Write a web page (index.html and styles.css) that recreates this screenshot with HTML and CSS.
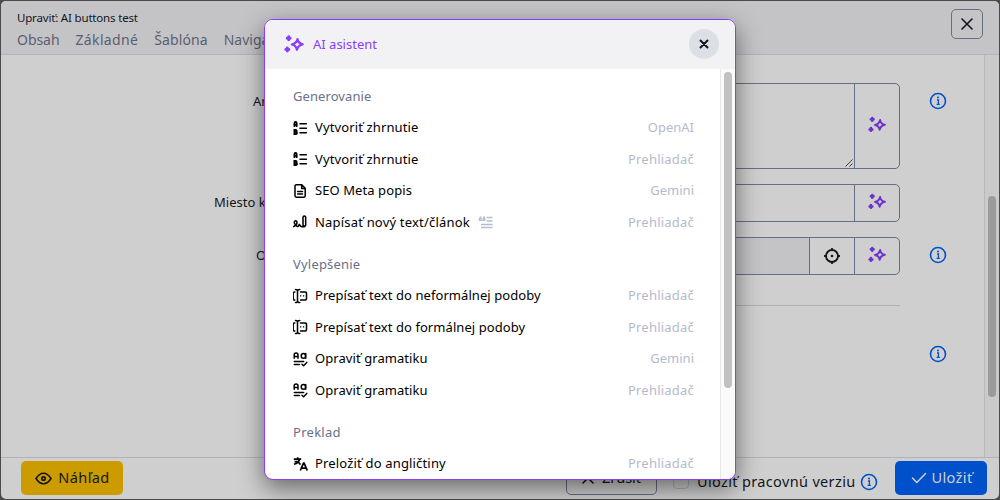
FILE: index.html
```html
<!DOCTYPE html>
<html lang="sk">
<head>
<meta charset="utf-8">
<title>AI asistent</title>
<link rel="stylesheet" href="styles.css">
</head>
<body>
<svg class="defs" width="0" height="0">
  <symbol id="spark" viewBox="0 0 20 18"><path d="M4.7 1.700v3M3.200 3.200h3M3.300 13v3M1.800 14.500h3" stroke="currentColor" stroke-width="2.900" stroke-linecap="round"/><path d="M13.500 4Q14 8.300 18.700 9.300Q14 10.300 12.900 14.800Q12.200 10.300 7.800 9.500Q12.500 8.500 13.500 4Z" fill="none" stroke="currentColor" stroke-width="2.200" stroke-linejoin="round"/></symbol>
  <symbol id="info" viewBox="0 0 18 18"><circle cx="9" cy="9" r="7.5" fill="none" stroke="currentColor" stroke-width="1.6"/><path d="M8 8h1.4v4.2M7.6 12.3h3.2" fill="none" stroke="currentColor" stroke-width="1.3"/><circle cx="9" cy="5.6" r="1" fill="currentColor"/></symbol>
  <symbol id="list" viewBox="0 0 16 16"><g fill="none" stroke="currentColor" stroke-linecap="round"><path d="M7 3.700h6.400M7 8.300h6.400M7 12.800h6.400" stroke-width="1.500"/><path d="M1.400 6.200V3.400a1.150 1.400 0 0 1 2.300 0v2.800M1.400 4.800h2.300M1.400 9.800h1.300a.9.900 0 0 1 0 2h-1.300zM1.400 11.800h1.500a1 1 0 0 1 0 2.200H1.400z" stroke-width="1.800"/></g></symbol>
  <symbol id="file" viewBox="0 0 16 16"><path d="M8.700 2v3.400h3.400M3.400 1.700h5.400l3.400 3.500v7.600a1.400 1.400 0 0 1-1.400 1.400H3.400A1.400 1.400 0 0 1 2 12.800V3.100a1.400 1.400 0 0 1 1.400-1.400zM4.600 8.400h4.900M4.600 11h4.900" fill="none" stroke="currentColor" stroke-width="1.500" stroke-linejoin="round" stroke-linecap="round"/></symbol>
  <symbol id="sign" viewBox="2 0 24 24"><path d="M3 19c3.333-2 5-4 5-6c0-3-1-3-2-3s-2.032 1.085-2 3c.034 2.048 1.658 2.877 2.500 4c1.500 2 2.500 2.500 3.500 1c.667-1 1.167-1.833 1.500-2.500c1 2.333 2.333 3.500 4 3.500h2.500M21 17V5c0-1.121-.879-2-2-2s-2 .879-2 2v12l2 2l2-2" fill="none" stroke="currentColor" stroke-width="2.300" stroke-linejoin="round" stroke-linecap="round"/></symbol>
  <symbol id="quote" viewBox="0 0 16 14"><path d="M8.500 2.500h6M8.500 6h6M3 9.500h11.500M3 12.500h11.500" fill="none" stroke="currentColor" stroke-width="1.300"/><path d="M3.400 1.800Q1.300 1.800 1.300 5.300H3.200V3.700H1.500M7 1.800Q4.900 1.800 4.900 5.300H6.800V3.700H5.100" fill="none" stroke="currentColor" stroke-width="1.200"/></symbol>
  <symbol id="rewrite" viewBox="1 0 16 16"><path d="M3.500 1.400q2 0 2 1.600v10q0 1.600-2 1.600M7.800 1.400q-2.200 0-2.200 1.600M7.800 14.600q-2.200 0-2.200-1.600M2.800 4H2.400A1.200 1.200 0 0 0 1.200 5.200v5.600A1.200 1.200 0 0 0 2.400 12h.4M8.500 4h4.800a1.200 1.200 0 0 1 1.200 1.200v5.600a1.200 1.200 0 0 1-1.200 1.200H8.500" fill="none" stroke="currentColor" stroke-width="1.500" stroke-linecap="round"/><path d="M8 7.300h1.300v1.300H8zM10.900 7.300h1.300v1.300h-1.300z" fill="currentColor"/></symbol>
  <symbol id="spell" viewBox="0 0 16 16"><g fill="none" stroke="currentColor" stroke-width="1.500" stroke-linecap="round" stroke-linejoin="round"><path d="M1.200 7.200V3.800a1.900 1.900 0 0 1 3.800 0v3.400M1.200 5.400h3.800M12.700 2.500v4.700"/><ellipse cx="10.400" cy="4.900" rx="2.200" ry="2.300"/><path d="M1.300 10.400h9.400M1.300 13.400h5.200M9 13.300l1.600 1.400 3.200-3.300"/></g></symbol>
  <symbol id="lang" viewBox="0 0 16 16"><g fill="none" stroke="currentColor" stroke-width="1.700"><path d="M.8 3.200h7.400M4.700 1.300v1.900M6.500 3.400Q5.500 7 1 8.300M1.500 5.600H5q1.500 2 2.500 3M7.300 14.500l3.200-7.300h.6l3.200 7.300M8.300 12.200h5"/></g></symbol>
  <symbol id="cross" viewBox="0 0 12 12"><path d="M1 1l10 10M11 1L1 11" stroke="currentColor" stroke-width="1.600" stroke-linecap="round"/></symbol>
</svg>

<div class="window">
  <header class="window-head">
    <div>
      <div class="window-title">Upraviť: AI buttons test</div>
      <nav class="tabs"><span class="t1">Obsah</span><span class="t2">Základné</span><span class="t3">Šablóna</span><span>Naviga</span></nav>
    </div>
    <button class="close-window"><svg width="12" height="12"><use href="#cross"/></svg></button>
  </header>

  <main class="window-body">
    <div class="form">
      <div class="row row-area">
        <label class="l1">An</label>
        <div class="group"><div class="field"><svg class="grip" width="8" height="8" viewBox="0 0 8 8"><path d="M.5 7.500l7-7M4.500 7.500l3-3" stroke="#333" stroke-width=".9"/></svg></div><div class="addon"><svg width="18" height="17"><use href="#spark"/></svg></div></div>
        <svg class="info" width="18" height="18"><use href="#info"/></svg>
      </div>
      <div class="row">
        <label class="l2">Miesto k</label>
        <div class="group"><div class="field"></div><div class="addon"><svg width="18" height="17"><use href="#spark"/></svg></div></div>
      </div>
      <div class="row">
        <label class="l3">O</label>
        <div class="group"><div class="field locked"></div><div class="addon target"><svg width="18" height="18" viewBox="0 0 18 18"><g fill="none" stroke="currentColor" stroke-width="1.800"><circle cx="9" cy="9" r="6"/><path d="M9 1v3M9 14v3M1 9h3M14 9h3"/></g><circle cx="9" cy="9" r="1.300" fill="currentColor"/></svg></div><div class="addon"><svg width="18" height="17"><use href="#spark"/></svg></div></div>
        <svg class="info" width="18" height="18"><use href="#info"/></svg>
      </div>
      <div class="rule"></div>
      <svg class="info last" width="18" height="18"><use href="#info"/></svg>
    </div>
    <div class="track"><div class="thumb"></div></div>
  </main>

  <footer class="window-foot">
    <button class="btn preview"><svg width="17" height="13" viewBox="0 0 17 13"><path d="M1 6.500Q4.300 1.200 8.500 1.200T16 6.500Q12.700 11.800 8.500 11.800T1 6.500Z" fill="none" stroke="currentColor" stroke-width="1.600"/><circle cx="8.500" cy="6.500" r="1.700" fill="none" stroke="currentColor" stroke-width="1.700"/></svg><span>Náhľad</span></button>
    <div class="actions">
      <button class="btn cancel"><svg width="12" height="12"><use href="#cross"/></svg><span>Zrušiť</span></button>
      <span class="check"></span>
      <span class="draft">Uložiť pracovnú verziu</span>
      <svg class="foot-info" width="18" height="18"><use href="#info"/></svg>
      <button class="btn save"><svg width="16" height="12" viewBox="0 0 16 12"><path d="M1.500 6l4.300 4.500L14.500 1.500" fill="none" stroke="currentColor" stroke-width="1.500" stroke-linecap="round" stroke-linejoin="round"/></svg><span>Uložiť</span></button>
    </div>
  </footer>
</div>

<section class="modal">
  <header class="modal-head">
    <svg width="20" height="18"><use href="#spark"/></svg>
    <h1>AI asistent</h1>
    <button class="close-modal"><svg width="10" height="10" viewBox="0 0 10 10"><path d="M1.500 1.500l7 7M8.500 1.500l-7 7" stroke="currentColor" stroke-width="2" stroke-linecap="round"/></svg></button>
  </header>
  <div class="modal-body">
    <div class="menu">
      <div class="section">
        <h2 class="h-gen">Generovanie</h2>
        <div class="item"><svg><use href="#list"/></svg><span class="zhr">Vytvoriť zhrnutie</span><em class="openai">OpenAI</em></div>
        <div class="item"><svg><use href="#list"/></svg><span class="zhr">Vytvoriť zhrnutie</span><em>Prehliadač</em></div>
        <div class="item"><svg><use href="#file"/></svg><span class="seo">SEO Meta popis</span><em class="gemini">Gemini</em></div>
        <div class="item"><svg><use href="#sign"/></svg><span class="nap">Napísať nový text/článok</span><svg class="quote"><use href="#quote"/></svg><em>Prehliadač</em></div>
      </div>
      <div class="section">
        <h2 class="h-vyl">Vylepšenie</h2>
        <div class="item"><svg><use href="#rewrite"/></svg><span class="nef">Prepísať text do neformálnej podoby</span><em>Prehliadač</em></div>
        <div class="item"><svg><use href="#rewrite"/></svg><span class="for">Prepísať text do formálnej podoby</span><em>Prehliadač</em></div>
        <div class="item"><svg><use href="#spell"/></svg><span class="gra">Opraviť gramatiku</span><em class="gemini">Gemini</em></div>
        <div class="item"><svg><use href="#spell"/></svg><span class="gra">Opraviť gramatiku</span><em>Prehliadač</em></div>
      </div>
      <div class="section">
        <h2 class="h-pre">Preklad</h2>
        <div class="item"><svg><use href="#lang"/></svg><span class="ang">Preložiť do angličtiny</span><em>Prehliadač</em></div>
      </div>
    </div>
    <div class="menu-track"><div class="menu-thumb"></div></div>
  </div>
</section>
</body>
</html>
```
FILE: styles.css
```css
* { box-sizing: border-box; }
body { margin: 0; width: 1000px; height: 500px; overflow: hidden; position: relative; background: #4b4a4b; font: 13px/20px "Noto Sans", sans-serif; color: #13151b; }
.defs { position: absolute; }
button { font: inherit; color: inherit; padding: 0; margin: 0; }
svg { flex: none; display: block; }
h1, h2 { margin: 0; font-weight: 400; font-size: 13px; }

.window { margin: 1px; width: 998px; height: 498px; display: flex; flex-direction: column; background: #cfcfcf; border-radius: 5px; overflow: hidden; }
.window-head { height: 54px; flex: none; display: flex; justify-content: space-between; background: #c4c4c7; border-bottom: 1px solid #b1b2be; padding: 7px 16px 0; }
.window-title { font-size: 11.500px; letter-spacing: -.18px; line-height: 20px; }
.tabs { display: flex; gap: 16px; font-size: 14px; line-height: 24px; color: #5a6072; white-space: nowrap; }
.t1 { letter-spacing: -.05px; }
.t2 { letter-spacing: .35px; }
.t3 { letter-spacing: .1px; }
.close-window { width: 32px; height: 30px; margin-top: 1px; display: grid; place-items: center; background: none; border: 1px solid #686e84; border-radius: 5px; }
.window-body { flex: 1; min-height: 0; display: flex; }
.form { flex: 1; display: flex; flex-direction: column; gap: 15px; padding: 28px 37px 0 0; }
.row { display: flex; height: 38px; flex: none; }
.row-area { height: 86px; }
.row label { width: 99px; margin-left: 213px; line-height: 36px; white-space: nowrap; }
.row .l1 { padding-left: 39px; }
.row .l3 { padding-left: 42px; }
.group { width: 587px; display: flex; border: 1px solid #686e84; border-radius: 5px; overflow: hidden; }
.field { flex: 1; display: flex; align-items: flex-end; justify-content: flex-end; padding: 1px; }
.locked { background: #c4c4c7; }
.addon { width: 45px; border-left: 1px solid #686e84; display: grid; place-items: center; color: #6d32c9; padding-bottom: 3px; }
.target { color: #13151b; padding-bottom: 1px; }
.info { color: #0050cc; margin: 9px 0 0 28.500px; }
.rule { height: 1px; margin: 15px 47px 0 312px; background: #b0b0b0; }
.last { margin: 24px 0 0 927.500px; }
.track { width: 15px; background: #cacaca; border-left: 1px solid #b9b9b9; padding: 141px 0 0 3px; }
.thumb { width: 8px; height: 201px; border-radius: 4px; background: #9b9b9b; }
.window-foot { height: 42px; flex: none; border-top: 1px solid #b1b2be; display: flex; justify-content: space-between; padding: 3px 12px 0 20px; font-size: 14.500px; }
.btn { height: 34px; border: 0; border-radius: 5px; display: flex; align-items: center; justify-content: center; white-space: nowrap; }
.btn span { padding-bottom: 2px; }
.preview { width: 102px; gap: 6px; padding-left: 1px; background: #cc9b00; letter-spacing: .4px; }
.actions { display: flex; align-items: center; height: 34px; }
.cancel { width: 91px; gap: 8px; background: none; border: 1px solid #686e84; }
.check { width: 16px; height: 16px; margin: 6px 8px 0 16px; border: 1px solid #adb0b8; border-radius: 4px; }
.draft { width: 158px; white-space: nowrap; padding-top: 5px; letter-spacing: .35px; }
.foot-info { color: #0050cc; margin: 8px 17px 0 5px; }
.save { width: 92px; gap: 4px; padding-left: 2px; background: #0050cc; color: #cfcfcf; letter-spacing: .4px; }

/* assistant dialog floats over the editor window */
.modal { position: absolute; left: 264px; top: 19px; width: 472px; height: 461px; display: flex; flex-direction: column; background: #fff; border: 1px solid #8a3dfb; border-radius: 9px; overflow: hidden; box-shadow: 0 8px 24px rgba(0, 0, 0, .5); color: #000; }
.modal-head { height: 49px; flex: none; display: flex; align-items: center; padding: 0 16px 1px 19px; background: #f2f2f5; color: #8a3dfb; }
.modal-head h1 { margin-left: 9px; flex: 1; padding-bottom: 1px; }
.close-modal { width: 30px; height: 30px; border: 0; border-radius: 50%; background: #dddfe6; color: #13151b; display: grid; place-items: center; }
.modal-body { flex: 1; min-height: 0; display: flex; }
.menu { flex: 1; padding: 11px 26px 0 28px; }
.section { margin-bottom: 10.500px; }
.section h2 { color: #6b7089; line-height: 32.500px; height: 31.500px; }
.h-gen { letter-spacing: .08px; }
.h-vyl { letter-spacing: .2px; }
.h-pre { letter-spacing: .28px; }
.item { height: 31.500px; display: flex; align-items: center; white-space: nowrap; }
.item span, .item em { padding-bottom: 1px; }
.item:nth-child(odd) span, .item:nth-child(odd) em { padding-bottom: 0; }
.zhr { letter-spacing: .13px; }
.seo { letter-spacing: .08px; }
.nap { letter-spacing: .19px; }
.nef, .for, .gra { letter-spacing: .07px; }
.ang { letter-spacing: .17px; }
.item svg { width: 16px; height: 16px; margin: 1px 6px 0 0; }
.item .quote { width: 16px; height: 14px; margin: 0 0 0 8px; color: #b6bccd; }
.item em { margin-left: auto; font-style: normal; color: #b6bacb; letter-spacing: .22px; }
.item .openai, .item .gemini { letter-spacing: 0; }
.menu-track { width: 15px; background: #fafafa; border-left: 1px solid #e8e8e8; padding: 3px 0 0 3px; }
.menu-thumb { width: 8px; height: 316px; border-radius: 4px; background: #c1c1c1; }
```
